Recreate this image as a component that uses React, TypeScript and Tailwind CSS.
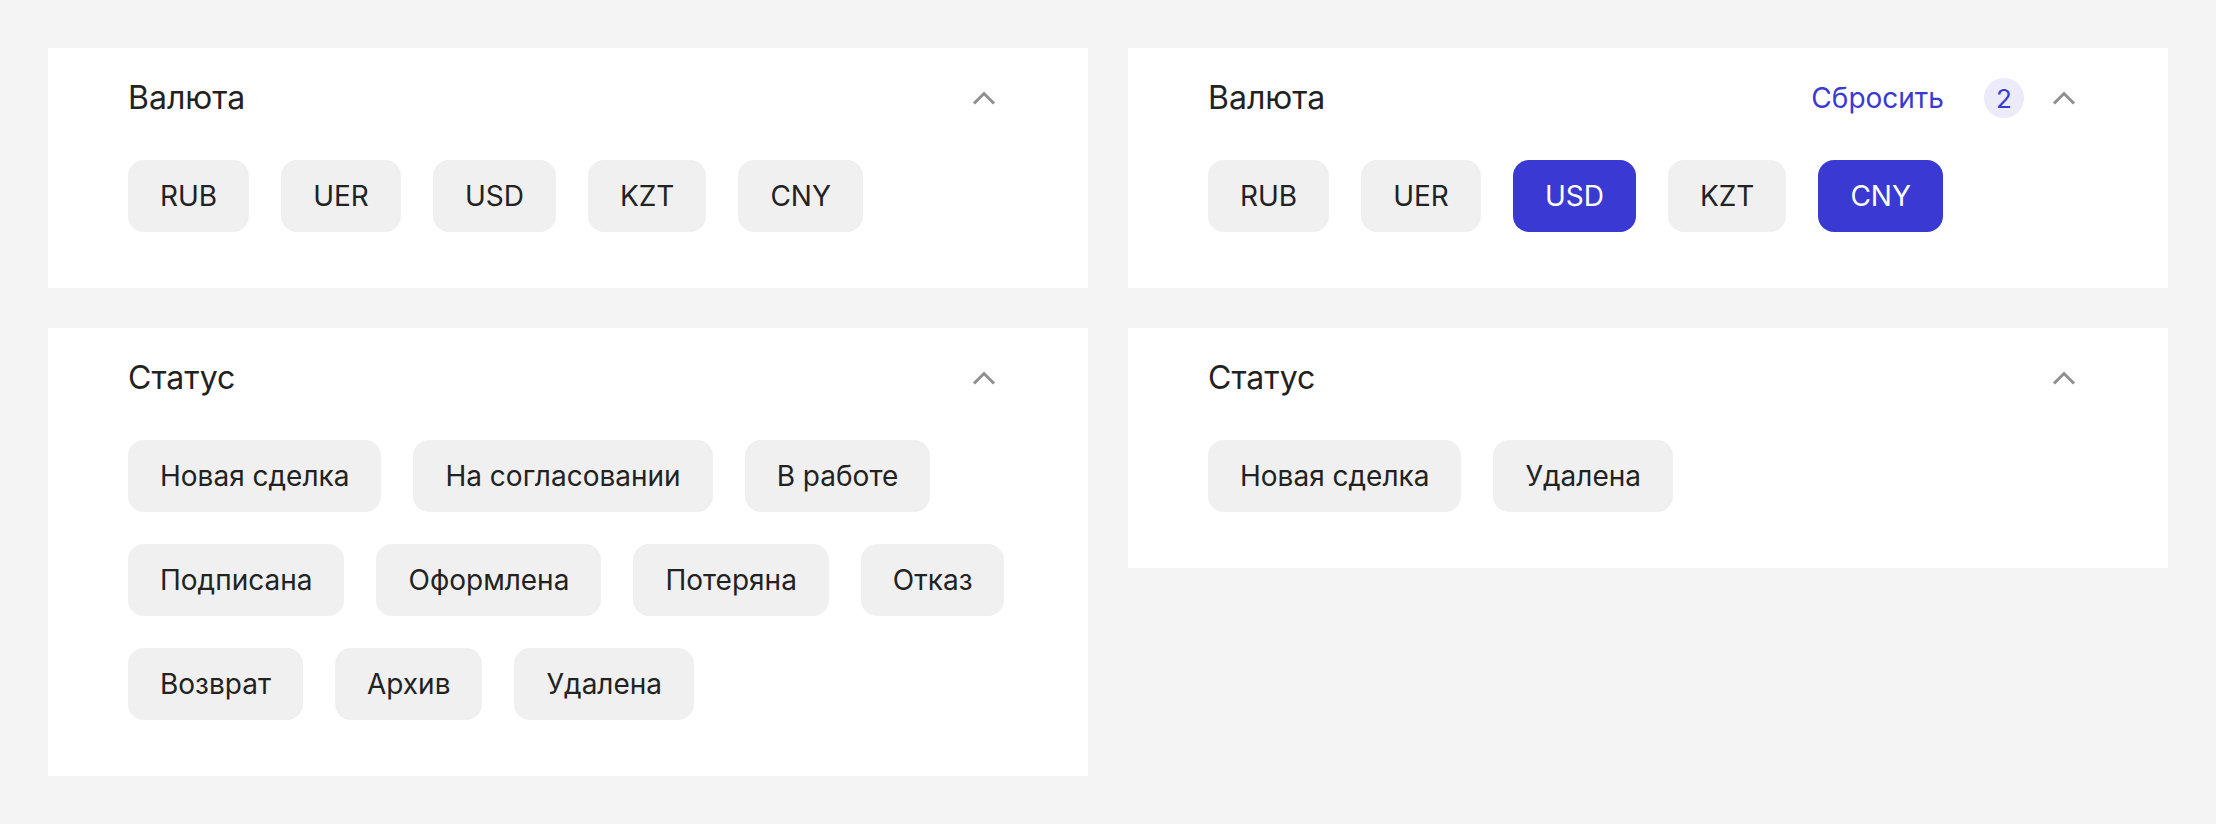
import { useState } from 'react';

const currencies = ['RUB', 'UER', 'USD', 'KZT', 'CNY'];
const allStatuses = [
    'Новая сделка',
    'На согласовании',
    'В работе',
    'Подписана',
    'Оформлена',
    'Потеряна',
    'Отказ',
    'Возврат',
    'Архив',
    'Удалена',
];

function Chevron() {
    return (
        <svg width="24" height="16" viewBox="0 0 24 16" fill="none" className="shrink-0 mr-3">
            <polyline points="2,13.5 12,3.5 22,13.5" stroke="#8f8f8f" strokeWidth="3" strokeLinejoin="miter" />
        </svg>
    );
}

function Chip({ label, active, onClick }: { label: string; active?: boolean; onClick?: () => void }) {
    return (
        <button
            onClick={onClick}
            className={
                active
                    ? 'px-8 py-[18px] rounded-2xl bg-[#3a3ad3] text-white text-[28px] leading-9'
                    : 'px-8 py-[18px] rounded-2xl bg-[#f0f0f0] text-[#222222] text-[28px] leading-9'
            }
        >
            {label}
        </button>
    );
}

function FilterCard({
    title,
    items,
    selected,
    onToggle,
    onReset,
}: {
    title: string;
    items: string[];
    selected: string[];
    onToggle: (v: string) => void;
    onReset: () => void;
}) {
    return (
        <div className="bg-white px-20 pt-8 pb-14">
            <div className="flex items-center justify-between h-9">
                <h2 className="text-[32px] leading-9 text-[#222222]">{title}</h2>
                <div className="flex items-center">
                    {selected.length > 0 && (
                        <>
                            <button onClick={onReset} className="text-[28px] leading-9 text-[#3a3ad3]">
                                Сбросить
                            </button>
                            <span className="ml-10 w-10 h-10 rounded-full bg-[#ebebfa] text-[#3a3ad3] text-[26px] flex items-center justify-center">
                                {selected.length}
                            </span>
                            <span className="w-7" />
                        </>
                    )}
                    <Chevron />
                </div>
            </div>
            <div className="flex flex-wrap gap-8 mt-11">
                {items.map((item) => (
                    <Chip key={item} label={item} active={selected.includes(item)} onClick={() => onToggle(item)} />
                ))}
            </div>
        </div>
    );
}

export default function App() {
    const [leftCur, setLeftCur] = useState<string[]>([]);
    const [rightCur, setRightCur] = useState<string[]>(['USD', 'CNY']);
    const [leftSt, setLeftSt] = useState<string[]>([]);
    const [rightSt, setRightSt] = useState<string[]>([]);

    const toggle = (list: string[], set: (v: string[]) => void) => (v: string) =>
        set(list.includes(v) ? list.filter((x) => x !== v) : [...list, v]);

    return (
        <div className="min-h-screen bg-[#f4f4f4] p-12 font-['Inter',sans-serif]">
            <div className="grid grid-cols-2 gap-10 items-start">
                <FilterCard
                    title="Валюта"
                    items={currencies}
                    selected={leftCur}
                    onToggle={toggle(leftCur, setLeftCur)}
                    onReset={() => setLeftCur([])}
                />
                <FilterCard
                    title="Валюта"
                    items={currencies}
                    selected={rightCur}
                    onToggle={toggle(rightCur, setRightCur)}
                    onReset={() => setRightCur([])}
                />
                <FilterCard
                    title="Статус"
                    items={allStatuses}
                    selected={leftSt}
                    onToggle={toggle(leftSt, setLeftSt)}
                    onReset={() => setLeftSt([])}
                />
                <FilterCard
                    title="Статус"
                    items={['Новая сделка', 'Удалена']}
                    selected={rightSt}
                    onToggle={toggle(rightSt, setRightSt)}
                    onReset={() => setRightSt([])}
                />
            </div>
        </div>
    );
}
